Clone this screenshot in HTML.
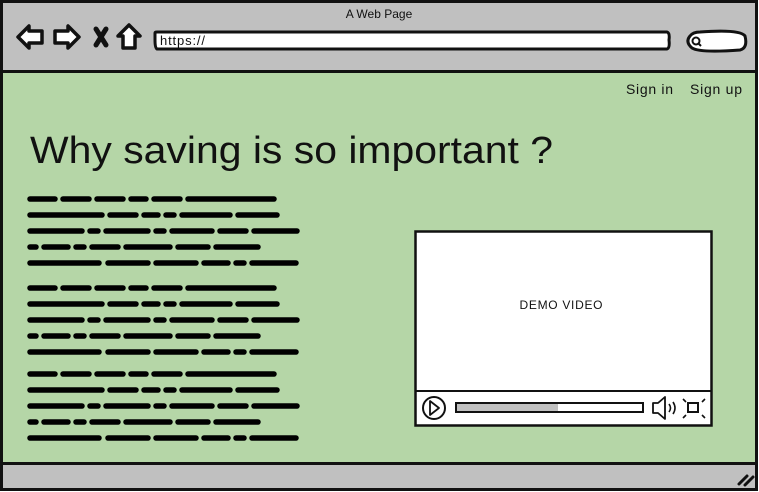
<!DOCTYPE html>
<html><head><meta charset="utf-8"><style>
html,body{margin:0;padding:0;background:#fff;}
svg{display:block;}
text{font-family:"Liberation Sans",sans-serif;fill:#111;}
</style></head><body>
<svg width="759" height="492" viewBox="0 0 759 492" xmlns="http://www.w3.org/2000/svg">
<defs>
<g id="para" stroke="#000" stroke-width="5.5" stroke-linecap="round">
<path d="M30 0H55M63 0H89M97 0H123M131 0H146M154 0H180M188 0H274"/>
<path d="M30 16H102M110 16H136M144 16H158M166 16H174M182 16H230M238 16H277"/>
<path d="M30 32H82M90 32H98M106 32H148M156 32H164M172 32H212M220 32H246M254 32H297"/>
<path d="M30 48H36M44 48H68M76 48H84M92 48H118M126 48H170M178 48H208M216 48H258"/>
<path d="M30 64H99M108 64H148M156 64H196M204 64H228M236 64H244M252 64H296"/>
</g>
</defs>
<rect x="1.5" y="1.5" width="755" height="488" fill="#c0c0c0" stroke="#111" stroke-width="3"/>
<rect x="3" y="72" width="752" height="391" fill="#b5d6a7"/>
<line x1="2" y1="71.5" x2="756" y2="71.5" stroke="#111" stroke-width="3"/>
<line x1="2" y1="463.5" x2="756" y2="463.5" stroke="#111" stroke-width="3"/>
<text x="379" y="18" font-size="12" text-anchor="middle">A Web Page</text>
<g fill="#fff" stroke="#111" stroke-width="3.5" stroke-linejoin="round">
<path d="M18 37L29 26V31H42V43H29V48Z"/>
<path d="M79 37L68 26V31H55V43H68V48Z"/>
<path d="M129 25L140 36H135V48H123V36H118Z"/>
</g>
<path d="M96 29L106 45M106 29L96 45" stroke="#111" stroke-width="5" stroke-linecap="round"/>
<path d="M155 33Q155 32 157 32H667Q670 33 669 40Q670 48 667 49H157Q155 48 155 40Z" fill="#fff" stroke="#111" stroke-width="3"/>
<text x="160" y="45" font-size="13" textLength="45">https://</text>
<path d="M700 32Q740 29 745 36Q748 48 740 50Q700 53 692 48Q685 42 690 36Q693 32 700 32Z" fill="#fff" stroke="#111" stroke-width="3"/>
<circle cx="696" cy="41" r="3.5" fill="none" stroke="#111" stroke-width="2"/>
<line x1="698" y1="43" x2="701" y2="46" stroke="#111" stroke-width="2"/>
<text x="626" y="94" font-size="14" textLength="47">Sign in</text>
<text x="690" y="94" font-size="14" textLength="52">Sign up</text>
<text x="30" y="163" font-size="38" textLength="523" lengthAdjust="spacingAndGlyphs">Why saving is so important ?</text>
<use href="#para" y="199"/>
<use href="#para" y="288"/>
<use href="#para" y="374"/>
<rect x="415.5" y="231.5" width="296" height="194" fill="#fff" stroke="#111" stroke-width="2.5"/>
<line x1="416" y1="391" x2="711" y2="391" stroke="#111" stroke-width="2"/>
<text x="561" y="309" font-size="12" text-anchor="middle" textLength="83">DEMO VIDEO</text>
<circle cx="434" cy="408" r="11" fill="#fff" stroke="#111" stroke-width="2"/>
<path d="M430 401L439 408L430 415Z" fill="none" stroke="#111" stroke-width="1.8" stroke-linejoin="round"/>
<rect x="456" y="403" width="187" height="9" fill="#fff" stroke="#111" stroke-width="2"/>
<rect x="457" y="404" width="101" height="7" fill="#c0c0c0"/>
<path d="M653 403H658L665 397V419L658 413H653Z" fill="none" stroke="#111" stroke-width="1.8" stroke-linejoin="round"/>
<path d="M669 404Q672 408 669 412M673 402Q677 408 673 414" fill="none" stroke="#111" stroke-width="1.6"/>
<rect x="688" y="403" width="10" height="9" fill="none" stroke="#111" stroke-width="2"/>
<path d="M683 399L686 402M705 399L702 402M683 418L686 415M705 418L702 415" stroke="#111" stroke-width="1.6"/>
<path d="M739 484L747 476M745 485L753 477" stroke="#111" stroke-width="3" stroke-linecap="round"/>
</svg>
</body></html>
